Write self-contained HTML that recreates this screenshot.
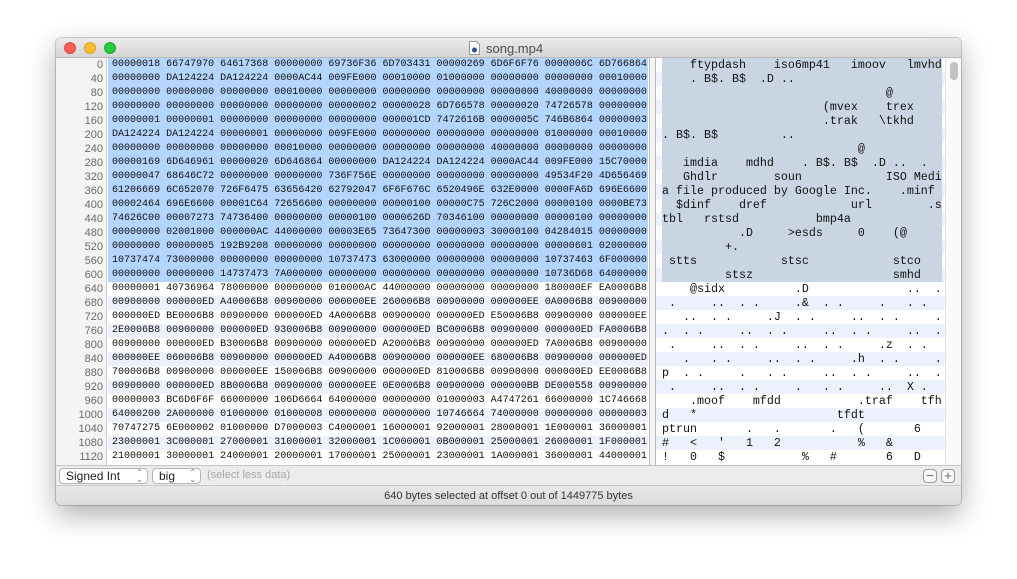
<!DOCTYPE html>
<html><head><meta charset="utf-8">
<style>
*{margin:0;padding:0;box-sizing:border-box}
body{width:1017px;height:579px;background:#fff;position:relative;overflow:hidden;font-family:"Liberation Sans",sans-serif}
#win{position:absolute;left:56px;top:38px;width:905px;height:467px;border-radius:5px;background:#ececec;box-shadow:0 10px 28px rgba(0,0,0,.32),0 0 0 1px rgba(0,0,0,.18);overflow:hidden}
#title{position:absolute;left:0;top:0;width:905px;height:20px;background:linear-gradient(#ebebeb,#d6d6d6);border-bottom:1px solid #b9b9b9}
.tl{position:absolute;top:4px;width:12px;height:12px;border-radius:50%}
#ttext{position:absolute;left:430px;top:3px;font-size:13px;color:#4d4d4d}
#content{position:absolute;left:0;top:20px;width:905px;height:407px;background:#fff}
#nums{position:absolute;left:0;top:0;width:51px;height:407px;background:#f4f4f4;border-right:1px solid #d0d0d0}
.row{position:absolute;height:14px;white-space:pre;line-height:14px}
.num{left:0;width:47px;text-align:right;font-size:11px;color:#6a6a6a;font-family:"Liberation Sans",sans-serif}
.hex{left:52px;width:540px;padding-left:4px;font-family:"Liberation Mono",monospace;font-size:10.03px;color:#111}
.asc{left:600px;width:289px;padding-left:6px;font-family:"Liberation Mono",monospace;font-size:11.67px;color:#111}
#div{position:absolute;left:593px;top:0;width:7px;height:407px;background:#f4f4f4;border-left:1px solid #b8b8b8;border-right:1px solid #b8b8b8}
#sb{position:absolute;left:889px;top:0;width:16px;height:407px;background:#fafafa;border-left:1px solid #e4e4e4}
#knob{position:absolute;left:4px;top:4px;width:8px;height:18px;border-radius:4px;background:#c2c2c2}
#bar{position:absolute;left:0;top:427px;width:905px;height:20px;border-top:1px solid #c4c4c4;background:#ececec}
.pop{position:absolute;top:2px;height:16px;border:1px solid #b6b6b6;border-radius:4px;background:#fff;font-size:12px;line-height:14px;padding-left:6px;color:#222}
.pop span{position:absolute;right:4px;top:0;font-size:8px;color:#777;line-height:7px;text-align:center}
#status{position:absolute;left:0;top:447px;width:905px;height:20px;border-top:1px solid #c9c9c9;background:linear-gradient(#e8e8e8,#dcdcdc);font-size:11px;text-align:center;line-height:20px;color:#333}
.btn{position:absolute;top:3px;width:14px;height:14px;border:1px solid #9a9a9a;border-radius:4px;background:#f7f7f7;font-size:13px;line-height:11px;text-align:center;color:#666}
</style></head><body>
<div id="win">
 <div id="title">
  <div class="tl" style="left:8px;background:#fc5f57;border:1px solid #de4a41"></div>
  <div class="tl" style="left:28px;background:#fdbc2e;border:1px solid #dea123"></div>
  <div class="tl" style="left:48px;background:#28c840;border:1px solid #1eab2f"></div>
  <svg style="position:absolute;left:413px;top:3px" width="11" height="14" viewBox="0 0 11 14"><path d="M0.5 0.5h7l3 3v10h-10z" fill="#fff" stroke="#999"/><circle cx="5.5" cy="9" r="2.5" fill="#2a4f8a"/></svg>
  <div id="ttext">song.mp4</div>
 </div>
 <div id="content">
  <div id="nums"></div>
  <div id="div"></div>
  <div id="sb"><div id="knob"></div></div>
  <div id="rows"></div>
 </div>
 <div id="bar">
  <div class="pop" style="left:3px;width:89px">Signed Int<span>⌃<br>⌄</span></div>
  <div class="pop" style="left:96px;width:49px">big<span>⌃<br>⌄</span></div>
  <div style="position:absolute;left:151px;top:3px;font-size:11px;color:#a9a9a9">(select less data)</div>
  <div class="btn" style="left:867px">−</div>
  <div class="btn" style="left:885px">+</div>
 </div>
 <div id="status">640 bytes selected at offset 0 out of 1449775 bytes</div>
</div>
<script>
(function(){
var H=[
"00000018 66747970 64617368 00000000 69736F36 6D703431 00000269 6D6F6F76 0000006C 6D766864",
"00000000 DA124224 DA124224 0000AC44 009FE000 00010000 01000000 00000000 00000000 00010000",
"00000000 00000000 00000000 00010000 00000000 00000000 00000000 00000000 40000000 00000000",
"00000000 00000000 00000000 00000000 00000002 00000028 6D766578 00000020 74726578 00000000",
"00000001 00000001 00000000 00000000 00000000 000001CD 7472616B 0000005C 746B6864 00000003",
"DA124224 DA124224 00000001 00000000 009FE000 00000000 00000000 00000000 01000000 00010000",
"00000000 00000000 00000000 00010000 00000000 00000000 00000000 40000000 00000000 00000000",
"00000169 6D646961 00000020 6D646864 00000000 DA124224 DA124224 0000AC44 009FE000 15C70000",
"00000047 68646C72 00000000 00000000 736F756E 00000000 00000000 00000000 49534F20 4D656469",
"61206669 6C652070 726F6475 63656420 62792047 6F6F676C 6520496E 632E0000 0000FA6D 696E6600",
"00002464 696E6600 00001C64 72656600 00000000 00000100 00000C75 726C2000 00000100 0000BE73",
"74626C00 00007273 74736400 00000000 00000100 0000626D 70346100 00000000 00000100 00000000",
"00000000 02001000 000000AC 44000000 00003E65 73647300 00000003 30000100 04284015 00000000",
"00000000 00000005 192B9208 00000000 00000000 00000000 00000000 00000000 00000601 02000000",
"10737474 73000000 00000000 00000000 10737473 63000000 00000000 00000000 10737463 6F000000",
"00000000 00000000 14737473 7A000000 00000000 00000000 00000000 00000000 10736D68 64000000",
"00000001 40736964 78000000 00000000 010000AC 44000000 00000000 00000000 180000EF EA0006B8",
"00900000 000000ED A40006B8 00900000 000000EE 260006B8 00900000 000000EE 0A0006B8 00900000",
"000000ED BE0006B8 00900000 000000ED 4A0006B8 00900000 000000ED E50006B8 00900000 000000EE",
"2E0006B8 00900000 000000ED 930006B8 00900000 000000ED BC0006B8 00900000 000000ED FA0006B8",
"00900000 000000ED B30006B8 00900000 000000ED A20006B8 00900000 000000ED 7A0006B8 00900000",
"000000EE 060006B8 00900000 000000ED A40006B8 00900000 000000EE 680006B8 00900000 000000ED",
"700006B8 00900000 000000EE 150006B8 00900000 000000ED 810006B8 00900000 000000ED EE0006B8",
"00900000 000000ED 8B0006B8 00900000 000000EE 0E0006B8 00900000 000000BB DE000558 00900000",
"00000003 BC6D6F6F 66000000 106D6664 64000000 00000000 01000003 A4747261 66000000 1C746668",
"64000200 2A000000 01000000 01000008 00000000 00000000 10746664 74000000 00000000 00000003",
"70747275 6E000002 01000000 D7000003 C4000001 16000001 92000001 28000001 1E000001 36000001",
"23000001 3C000001 27000001 31000001 32000001 1C000001 0B000001 25000001 26000001 1F000001",
"21000001 30000001 24000001 20000001 17000001 25000001 23000001 1A000001 36000001 44000001"];
var out='';
function esc(c){return c=='<'?'&lt;':c=='>'?'&gt;':c=='&'?'&amp;':c;}
for(var i=0;i<H.length;i++){
 var ty=i*14, sel=i<16, odd=i%2==1;
 var hbg=sel?'#b4d5fe':(odd?'#edf0fd':'#fff');
 var abg=odd?'#edf0fd':'#fff';
 var h=H[i].replace(/ /g,''),a='';
 for(var j=0;j<h.length;j+=2){var v=parseInt(h.substr(j,2),16);a+=v<32?' ':v>126?'.':esc(String.fromCharCode(v));}
 out+='<div class="row num" style="top:'+ty+'px">'+(i*40)+'</div>';
 out+='<div class="row hex" style="top:'+ty+'px;background:'+hbg+'">'+H[i]+'</div>';
 out+='<div class="row asc" style="top:'+ty+'px;background:'+abg+'">'+(sel?'<span style="position:absolute;left:6px;top:0;width:280px;height:14px;background:#cad5e3"></span>':'')+'<span style="position:relative">'+a+'</span></div>';
}
document.getElementById('rows').innerHTML=out;
})();
</script>
</body></html>
